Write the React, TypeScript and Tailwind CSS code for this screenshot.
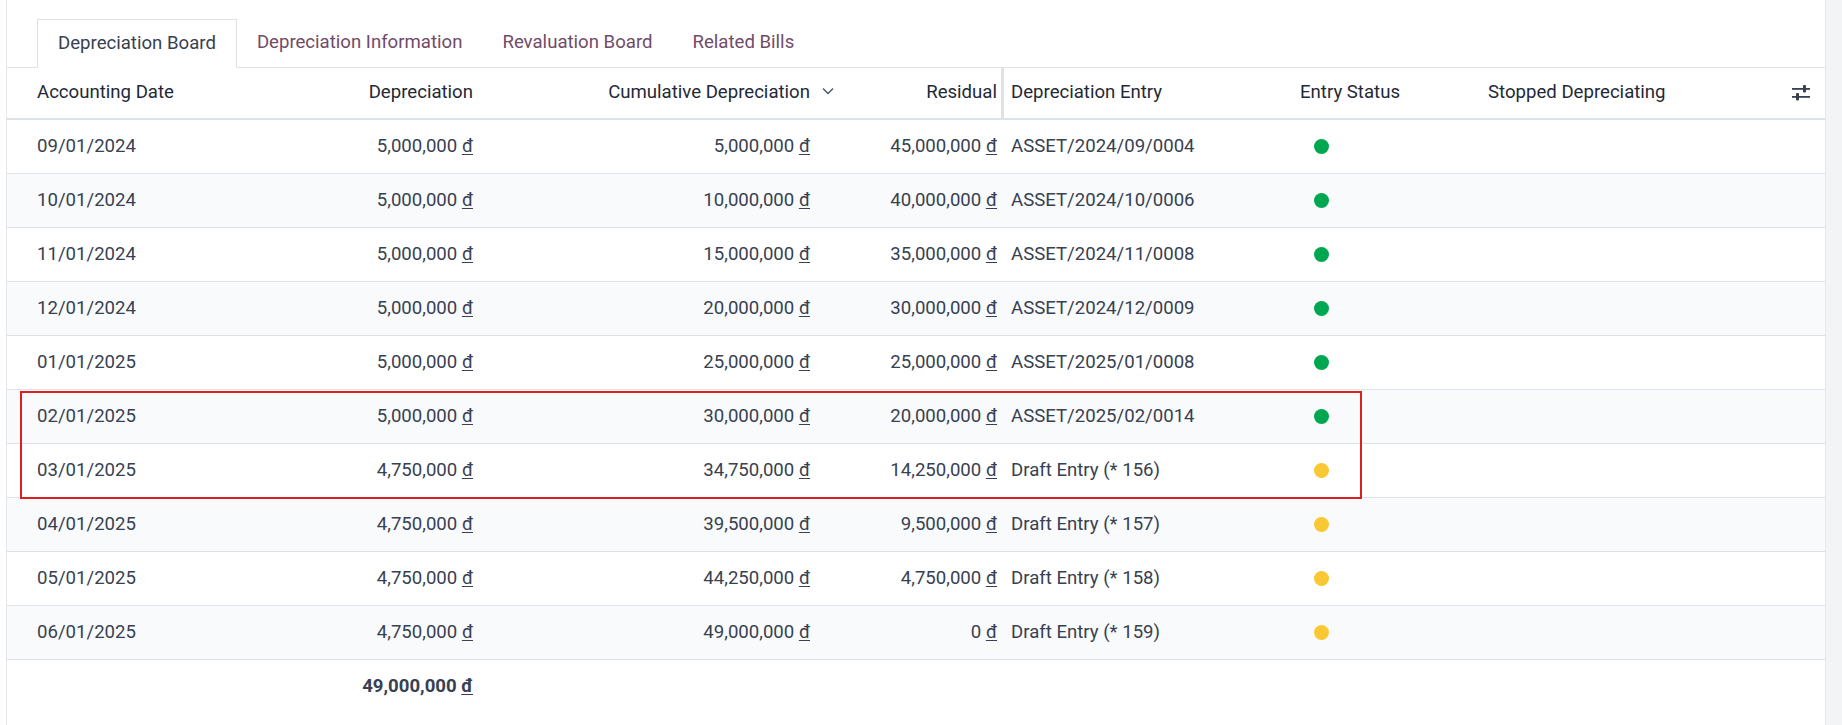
import React from "react";

const rows = [
  ["09/01/2024", "5,000,000", "5,000,000", "45,000,000", "ASSET/2024/09/0004", "g"],
  ["10/01/2024", "5,000,000", "10,000,000", "40,000,000", "ASSET/2024/10/0006", "g"],
  ["11/01/2024", "5,000,000", "15,000,000", "35,000,000", "ASSET/2024/11/0008", "g"],
  ["12/01/2024", "5,000,000", "20,000,000", "30,000,000", "ASSET/2024/12/0009", "g"],
  ["01/01/2025", "5,000,000", "25,000,000", "25,000,000", "ASSET/2025/01/0008", "g"],
  ["02/01/2025", "5,000,000", "30,000,000", "20,000,000", "ASSET/2025/02/0014", "g"],
  ["03/01/2025", "4,750,000", "34,750,000", "14,250,000", "Draft Entry (* 156)", "y"],
  ["04/01/2025", "4,750,000", "39,500,000", "9,500,000", "Draft Entry (* 157)", "y"],
  ["05/01/2025", "4,750,000", "44,250,000", "4,750,000", "Draft Entry (* 158)", "y"],
  ["06/01/2025", "4,750,000", "49,000,000", "0", "Draft Entry (* 159)", "y"],
];

const cols = "grid grid-cols-[243px_230px_337px_187px_246px_200px_330px_1fr]";

function Money({ v }: { v: string }) {
  return (
    <span>
      {v} <span className="underline underline-offset-2">đ</span>
    </span>
  );
}

export default function App() {
  return (
    <div
      className="relative w-[1842px] h-[725px] bg-white overflow-hidden text-[18.6px] text-[#374151]"
      style={{ fontFamily: "Roboto, 'Liberation Sans', sans-serif" }}
    >
      <div className="absolute left-0 top-0 w-[7px] h-full border-r border-[#e5e7eb] bg-white" />
      <div className="absolute left-[1825px] top-0 w-[17px] h-full bg-[#f3f4f6] border-l border-[#e5e7eb]" />
      <div className="ml-[7px] w-[1818px]">
        <div className="h-[68px] flex items-end pl-[30px] border-b border-[#dee2e6]">
          <div className="h-[49px] px-[20px] flex items-center border border-[#dee2e6] border-b-white -mb-px bg-white text-[#374151]">
            Depreciation Board
          </div>
          <div className="h-[49px] px-[20px] flex items-center text-[#714b67]">Depreciation Information</div>
          <div className="h-[49px] px-[20px] flex items-center text-[#714b67]">Revaluation Board</div>
          <div className="h-[49px] px-[20px] flex items-center text-[#714b67]">Related Bills</div>
        </div>
        <div className={`${cols} h-[52px] items-center border-b-2 border-[#dee2e6] text-[#1f2937]`}>
          <div className="pl-[30px]">Accounting Date</div>
          <div className="text-right pr-[7px]">Depreciation</div>
          <div className="relative text-right pr-[7px]">
            Cumulative Depreciation
            <svg className="absolute right-[-18px] top-[5px]" width="14" height="14" viewBox="0 0 14 14" fill="none" stroke="#4b5563" strokeWidth="1.4">
              <path d="M2 4.5 L7 9.5 L12 4.5" />
            </svg>
          </div>
          <div className="text-right pr-[4px] h-full flex items-center justify-end border-r-[3px] border-[#dee2e6]">Residual</div>
          <div className="pl-[7px]">Depreciation Entry</div>
          <div className="text-center">Entry Status</div>
          <div className="pl-[38px]">Stopped Depreciating</div>
          <div className="flex justify-end pr-[14px]">
            <svg width="20" height="18" viewBox="0 0 20 18" fill="#374151">
              <rect x="1" y="4" width="18" height="1.8" />
              <rect x="1" y="12" width="18" height="1.8" />
              <rect x="12" y="1" width="3" height="7.5" rx="1" />
              <rect x="5" y="9" width="3" height="7.5" rx="1" />
            </svg>
          </div>
        </div>
        {rows.map((r, i) => (
          <div key={i} className={`${cols} h-[54px] items-center border-b border-[#dee2e6] ${i % 2 ? "bg-[#f9fafb]" : "bg-white"}`}>
            <div className="pl-[30px]">{r[0]}</div>
            <div className="text-right pr-[7px]"><Money v={r[1]} /></div>
            <div className="text-right pr-[7px]"><Money v={r[2]} /></div>
            <div className="text-right pr-[7px]"><Money v={r[3]} /></div>
            <div className="pl-[7px]">{r[4]}</div>
            <div className="pl-[64px]">
              <div className={`w-[15px] h-[15px] rounded-full ${r[5] === "g" ? "bg-[#00a650]" : "bg-[#f9c833]"}`} />
            </div>
            <div />
            <div />
          </div>
        ))}
        <div className={`${cols} h-[54px] items-center font-bold`}>
          <div />
          <div className="text-right pr-[7px]"><Money v="49,000,000" /></div>
        </div>
      </div>
      <div className="absolute left-[20px] top-[391px] w-[1342px] h-[108px] border-2 border-[#dd1f1f]" />
    </div>
  );
}
